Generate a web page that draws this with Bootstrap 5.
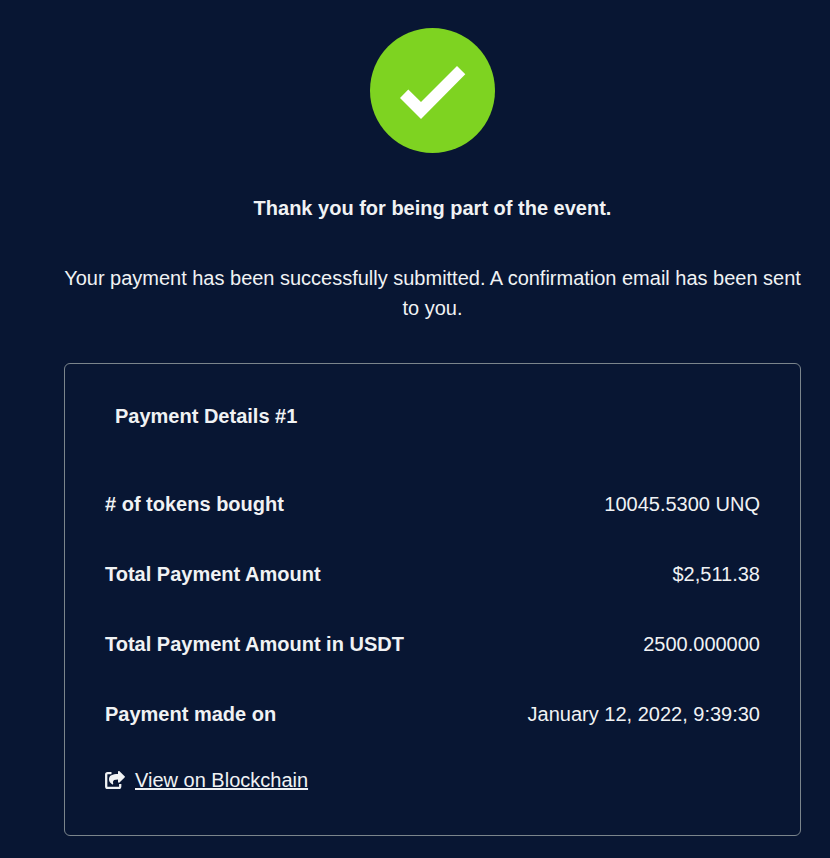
<!DOCTYPE html>
<html lang="en">
<head>
    <meta charset="UTF-8">
    <meta name="viewport" content="width=device-width, initial-scale=1.0">
    <title>Payment Confirmation</title>
    <link href="https://cdn.jsdelivr.net/npm/bootstrap@5.3.0/dist/css/bootstrap.min.css" rel="stylesheet">
    <style>
        :root { --navy: #081633; --text: #f0f2f4; --line: #7b858c; }
        body {
            background: var(--navy);
            color: var(--text);
            font-family: "Liberation Sans", Arial, sans-serif;
            font-size: 20px;
            line-height: 30px;
            overflow: hidden;
        }
        .confirm-page { padding: 28px 29px 22px 64px; }
        .success-icon { width: 125px; height: 125px; }
        .thanks-title { font-size: 20px; line-height: 30px; margin: 40px 0; }
        .submit-note { margin: 0 -4px 40px; letter-spacing: -.01px; }
        .payment-box {
            border: 1px solid var(--line);
            border-radius: 6px;
            padding: 37px 40px 40px;
        }
        .payment-title { font-size: 20px; line-height: 30px; padding-left: 10px; margin-bottom: 58px; }
        .payment-rows { gap: 40px; }
        .chain-link { margin-top: 36px; gap: 10px; }
        .chain-link a { color: var(--text); }
    </style>
</head>
<body>

<main class="confirm-page">
    <!-- Status message -->
    <div class="text-center">
        <svg class="success-icon d-block mx-auto" viewBox="0 0 125 125">
            <circle cx="62.5" cy="62.5" r="62.5" fill="#7ed321"/>
            <path fill="#fff" d="M30 70l8.3-8.6L51 74l36-36 8.3 8.3L51 91z"/>
        </svg>
        <h1 class="thanks-title fw-bold">Thank you for being part of the event.</h1>
        <p class="submit-note">Your payment has been successfully submitted. A confirmation email has been sent<br>to you.</p>
    </div>

    <!-- Payment details -->
    <section class="payment-box">
        <h2 class="payment-title fw-bold">Payment Details #1</h2>
        <div class="payment-rows d-flex flex-column">
            <div class="d-flex justify-content-between">
                <strong># of tokens bought</strong>
                <span>10045.5300 UNQ</span>
            </div>
            <div class="d-flex justify-content-between">
                <strong>Total Payment Amount</strong>
                <span>$2,511.38</span>
            </div>
            <div class="d-flex justify-content-between">
                <strong>Total Payment Amount in USDT</strong>
                <span>2500.000000</span>
            </div>
            <div class="d-flex justify-content-between">
                <strong>Payment made on</strong>
                <span>January 12, 2022, 9:39:30</span>
            </div>
        </div>
        <div class="chain-link d-flex align-items-center">
            <svg width="20" height="18" viewBox="0 0 20 18" fill="none">
                <path d="M6.500 2.200H2.600Q1.200 2.200 1.200 3.600v11.800Q1.200 16.800 2.600 16.800h11.200q1.400 0 1.400-1.400V13" stroke="#f0f2f4" stroke-width="2.300"/>
                <path d="M13 .9c0-.9.900-1.200 1.500-.6l5.100 4.900c.5.4.5.9 0 1.300l-5.100 4.900c-.6.6-1.500.2-1.500-.7V8.400C8.900 8.400 7.300 9.400 8.200 12.500c.2.800-.5 1.200-1.100.7C5.400 12 4 10.400 4 8.400 4 4.200 7.500 3.100 13 3z" fill="#f0f2f4"/>
            </svg>
            <a href="#" class="text-decoration-underline">View on Blockchain</a>
        </div>
    </section>
</main>

<script src="https://cdn.jsdelivr.net/npm/bootstrap@5.3.0/dist/js/bootstrap.bundle.min.js"></script>
</body>
</html>
